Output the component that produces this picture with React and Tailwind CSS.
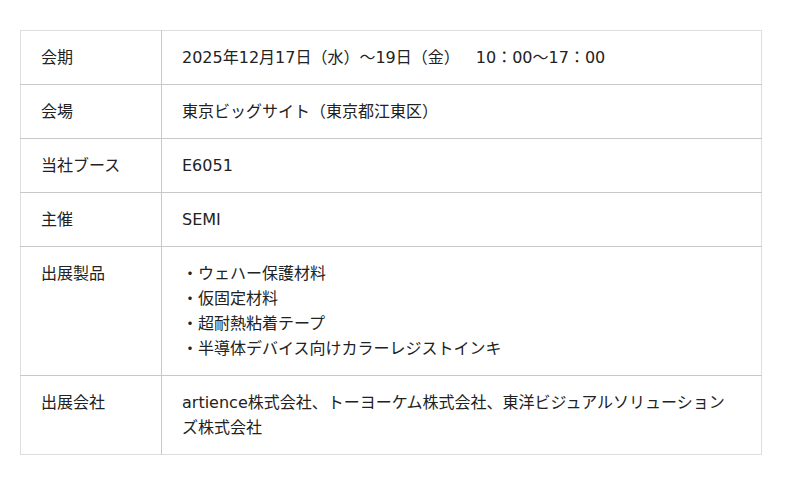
import React from "react";

const rows = [
  {
    label: "会期",
    value: [
      <>
        2025年12月17日（水）〜19日（金）　<span className="inline-block w-[8px]"></span>10：00〜17：00
      </>,
    ],
  },
  { label: "会場", value: ["東京ビッグサイト（東京都江東区）"] },
  { label: "当社ブース", value: ["E6051"] },
  { label: "主催", value: ["SEMI"] },
  {
    label: "出展製品",
    value: [
      "・ウェハー保護材料",
      "・仮固定材料",
      "・超耐熱粘着テープ",
      "・半導体デバイス向けカラーレジストインキ",
    ],
  },
  {
    label: "出展会社",
    value: ["artience株式会社、トーヨーケム株式会社、東洋ビジュアルソリューションズ株式会社"],
  },
];

export default function App() {
  return (
    <div
      className="w-[800px] h-[485px] bg-white pt-[30px] pl-[20px]"
      style={{ fontFamily: '"DejaVu Sans", "Noto Sans CJK JP", sans-serif' }}
    >
      <table className="w-[742px] border-collapse border border-[#dddddd] text-[16px] leading-[25px] text-[#222222]">
        <tbody>
          {rows.map((r, i) => (
            <tr key={i} className="border-b border-[#c8c8c8] last:border-b-[#dddddd]">
              <th className="w-[141px] border-r border-[#c8c8c8] px-[20px] py-[14px] text-left align-top font-normal">
                {r.label}
              </th>
              <td className="pl-[20px] pr-[24px] py-[14px] align-top">
                {r.value.map((v, j) => (
                  <div key={j}>{v}</div>
                ))}
              </td>
            </tr>
          ))}
        </tbody>
      </table>
    </div>
  );
}
